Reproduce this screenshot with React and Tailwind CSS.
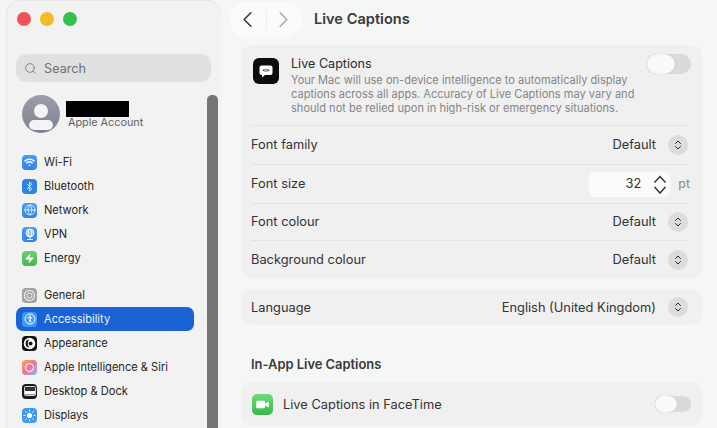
import { ChevronLeft, ChevronRight, ChevronsUpDown, Search, Bluetooth, Globe, Zap, Video } from 'lucide-react'

function IconBox({ className, children }) {
  return <div className={`w-[15px] h-[15px] rounded-[4px] flex items-center justify-center shrink-0 ${className}`}>{children}</div>
}

const GROUP_ONE = [
  {
    label: 'Wi-Fi',
    bg: 'bg-gradient-to-b from-[#4a9df5] to-[#2f82e6]',
    icon: (
      <svg width="11" height="9" viewBox="0 0 11 9" fill="none" stroke="white" strokeWidth="1.300" strokeLinecap="round">
        <path d="M1 3a6.500 6.500 0 0 1 9 0" />
        <path d="M2.800 5a4 4 0 0 1 5.400 0" />
        <circle cx="5.500" cy="7.300" r="0.900" fill="white" stroke="none" />
      </svg>
    ),
  },
  { label: 'Bluetooth', bg: 'bg-[#2f82e6]', icon: <Bluetooth size={11} strokeWidth={1.800} color="white" /> },
  { label: 'Network', bg: 'bg-gradient-to-b from-[#4a9df5] to-[#2f82e6]', icon: <Globe size={12} strokeWidth={1.500} color="white" /> },
  {
    label: 'VPN',
    bg: 'bg-gradient-to-b from-[#4a9df5] to-[#2f82e6]',
    icon: (
      <svg width="12" height="13" viewBox="0 0 12 13" fill="none" stroke="white" strokeWidth="0.900">
        <circle cx="6" cy="5" r="4" />
        <ellipse cx="6" cy="5" rx="1.800" ry="4" />
        <path d="M2 5h8M3 3h6M3 7h6M6 9v2M3 11.500h6" />
      </svg>
    ),
  },
  { label: 'Energy', bg: 'bg-gradient-to-b from-[#6ccf72] to-[#45b652]', icon: <Zap size={11} fill="white" strokeWidth={0} /> },
]

const GROUP_TWO = [
  {
    label: 'General',
    bg: 'bg-[#a3a3a6]',
    icon: (
      <svg width="13" height="13" viewBox="0 0 13 13" fill="none" stroke="white">
        <circle cx="6.500" cy="6.500" r="5" strokeWidth="1.200" strokeDasharray="1.400 0.400" />
        <circle cx="6.500" cy="6.500" r="2.500" strokeWidth="0.800" />
      </svg>
    ),
  },
  {
    label: 'Accessibility',
    active: true,
    bg: 'bg-[#3f97f0]',
    icon: (
      <svg width="12" height="12" viewBox="0 0 12 12" fill="none" stroke="white">
        <circle cx="6" cy="6" r="5" strokeWidth="1" />
        <circle cx="6" cy="3.400" r="0.900" fill="white" stroke="none" />
        <path d="M3.500 4.900h5M6 5v2M6 7L4.800 9.300M6 7l1.200 2.300" strokeWidth="1" />
      </svg>
    ),
  },
  {
    label: 'Appearance',
    bg: 'bg-[#111]',
    icon: (
      <svg width="13" height="13" viewBox="0 0 12 12">
        <circle cx="6" cy="6" r="5.300" fill="white" />
        <path d="M6 2.400a3.600 3.600 0 0 0 0 7.200c-1.200-1-1.600-2.300-1.600-3.600S4.800 3.400 6 2.400z" fill="#111" />
        <circle cx="7" cy="6" r="1.800" fill="#111" />
      </svg>
    ),
  },
  {
    label: 'Apple Intelligence & Siri',
    bg: 'bg-gradient-to-br from-[#f6a23c] via-[#ef6f9f] to-[#6cb8f5]',
    icon: <div className="w-[9px] h-[9px] rounded-full border border-white" />,
  },
  {
    label: 'Desktop & Dock',
    bg: 'bg-[#1b1b1b]',
    icon: (
      <svg width="12" height="10" viewBox="0 0 12 10">
        <rect x="0.500" y="0.500" width="11" height="9" rx="1" fill="#333" stroke="white" strokeWidth="0.800" />
        <rect x="1" y="5" width="10" height="3.500" fill="white" />
      </svg>
    ),
  },
  {
    label: 'Displays',
    bg: 'bg-[#3f9bf2]',
    icon: (
      <svg width="13" height="13" viewBox="0 0 13 13" fill="white" stroke="white" strokeWidth="1" strokeLinecap="round">
        <circle cx="6.500" cy="6.500" r="2.600" stroke="none" />
        <path d="M6.500 1v1M6.500 11v1M1 6.500h1M11 6.500h1M2.600 2.600l.7.7M9.700 9.700l.7.7M2.600 10.400l.7-.7M9.700 3.300l.7-.7" />
      </svg>
    ),
  },
]

function SideRow({ item }) {
  return (
    <div className={`h-6 flex items-center rounded-[7px] pl-[6px] gap-[7px] ${item.active ? 'bg-[#1a63d6] text-[#e8f1fd]' : 'text-[#262626]'}`}>
      <IconBox className={item.bg}>{item.icon}</IconBox>
      <span className="text-[11.100px] whitespace-nowrap">{item.label}</span>
    </div>
  )
}

function Sidebar() {
  return (
    <div className="relative w-[215px] ml-[6px] shrink-0 bg-[#f2f2f2] rounded-tl-[14px] rounded-tr-[14px] pl-[9px] pr-[27px] border-t border-l border-[#e6e6e6]">
      <div className="flex gap-[9px] pl-[1px] pt-[11px]">
        <div className="w-[14px] h-[14px] rounded-full bg-[#f2515a]" />
        <div className="w-[14px] h-[14px] rounded-full bg-[#f2bb28]" />
        <div className="w-[14px] h-[14px] rounded-full bg-[#35bf4e]" />
      </div>
      <div className="w-[195px] h-[28px] mt-[28px] rounded-[10px] bg-[#e0e0e0] flex items-center pl-[8px] gap-[7px] text-[#707070]">
        <Search size={13} strokeWidth={1.500} />
        <span className="text-[12.700px] mt-[2px]">Search</span>
      </div>
      <div className="flex items-center mt-[13px] ml-[6px]">
        <div className="w-[38px] h-[38px] rounded-full bg-gradient-to-b from-[#9a9eab] to-[#7f828d] relative overflow-hidden shrink-0">
          <div className="absolute left-[12px] top-[9px] w-[14px] h-[14px] rounded-full bg-[#f4f4f6]" />
          <div className="absolute left-[7px] top-[25px] w-[24px] h-[10px] rounded-full bg-[#f4f4f6]" />
        </div>
        <div className="ml-[6px] mt-[1px]">
          <div className="w-[63px] h-[16px] bg-black" />
          <div className="text-[10.800px] leading-[13px] ml-[2px] mt-[-1px] text-[#5f5f5f] whitespace-nowrap">Apple Account</div>
        </div>
      </div>
      <div className="mt-[17px]">
        {GROUP_ONE.map((item) => <SideRow key={item.label} item={item} />)}
      </div>
      <div className="mt-[13px]">
        {GROUP_TWO.map((item) => <SideRow key={item.label} item={item} />)}
      </div>
      <div className="absolute left-[200px] top-[94px] bottom-0 w-[11px] rounded-t-[5px] bg-[#757575]" />
    </div>
  )
}

function Stepper() {
  return (
    <div className="w-[20px] h-[20px] rounded-full bg-[#dcdcdc] flex items-center justify-center shrink-0">
      <ChevronsUpDown size={12} strokeWidth={2} color="#2a2a2a" />
    </div>
  )
}

function Toggle({ w, h, knob }) {
  return (
    <div className={`${w} ${h} rounded-full bg-[#dadada] shrink-0 flex items-center`}>
      <div className={`${knob} ${h} rounded-full bg-[#fafafa] shadow-[0_0_1px_rgba(0,0,0,0.3)]`} />
    </div>
  )
}

function SelectRow({ label, value, h, border = true, textClass = '' }) {
  return (
    <div className={`${h} ml-[10px] mr-[14px] flex items-center justify-between ${border ? 'border-t border-[#e2e2e2]' : ''}`}>
      <span className={`text-[12.850px] text-[#333] ${textClass}`}>{label}</span>
      <div className="flex items-center gap-[12px]">
        <span className={`text-[12.850px] text-[#333] ${textClass}`}>{value}</span>
        <Stepper />
      </div>
    </div>
  )
}

export default function App() {
  return (
    <div className="w-[717px] h-[428px] overflow-hidden flex bg-[#f5f6f6]" style={{ fontFamily: 'Inter, "Liberation Sans", sans-serif' }}>
      <Sidebar />
      <div className="flex-1 min-w-0">
        <div className="h-[45px] flex pt-[2px] pl-[8px]">
          <div className="w-[73px] h-[35px] rounded-full bg-[#fbfbfb] flex items-center pl-[5px]">
            <ChevronLeft size={27} strokeWidth={1.300} color="#333" />
            <div className="w-px h-[20px] bg-[#eeeeee] ml-[5px] mr-[3px]" />
            <ChevronRight size={27} strokeWidth={1.300} color="#a8a8a8" />
          </div>
          <span className="ml-[12px] mt-[9px] text-[14.600px] leading-[17px] font-semibold text-[#3a3a3a]">Live Captions</span>
        </div>
        <div className="ml-[20px] mr-[15px]">
          <div className="bg-[#f0f0f0] rounded-[10px]">
            <div className="h-[80px] flex pl-[12px] pr-[11px] pt-[9px]">
              <div className="w-[26px] h-[26px] mt-[4px] rounded-[6px] bg-[#0c0c0c] flex items-center justify-center shrink-0">
                <svg width="18" height="18" viewBox="0 0 18 18">
                  <path d="M4.500 3.500h9a2 2 0 0 1 2 2v5.500a2 2 0 0 1-2 2H8l-3 2.500v-2.500h-.5a2 2 0 0 1-2-2V5.500a2 2 0 0 1 2-2z" fill="white" />
                  <path d="M5.500 8.200l2-1.500v3zM12.500 8.200l-2-1.500v3z" fill="#333" />
                  <rect x="8.600" y="6.500" width="0.800" height="3.500" fill="#333" />
                </svg>
              </div>
              <div className="ml-[12px] flex-1 min-w-0 pt-[1px]">
                <div className="text-[12.600px] leading-[18px] text-[#2a2a2a]">Live Captions</div>
                <div className="text-[11.070px] leading-[14px] text-[#858585] whitespace-nowrap">
                  <div>Your Mac will use on-device intelligence to automatically display</div>
                  <div>captions across all apps. Accuracy of Live Captions may vary and</div>
                  <div>should not be relied upon in high-risk or emergency situations.</div>
                </div>
              </div>
              <Toggle w="w-[44px]" h="h-[20px]" knob="w-[28px]" />
            </div>
            <SelectRow label="Font family" value="Default" h="h-[39px]" />
            <div className="h-[39px] ml-[10px] mr-[12px] flex items-center justify-between border-t border-[#e2e2e2]">
              <span className="text-[12.850px] text-[#333]">Font size</span>
              <div className="flex items-center gap-[8px]">
                <div className="w-[81px] h-[25px] rounded-[6px] bg-[#fbfbfb] flex items-center justify-end pr-[3px]">
                  <span className="text-[12.850px] text-[#333] mr-[12px]">32</span>
                  <svg width="14" height="20" viewBox="0 0 14 20" fill="none" stroke="#333" strokeWidth="1.500">
                    <path d="M1.500 8.500L7 2.500l5.500 6" />
                    <path d="M1.500 13L7 19l5.500-6" />
                  </svg>
                </div>
                <span className="text-[12.500px] text-[#8a8a8a]">pt</span>
              </div>
            </div>
            <SelectRow label="Font colour" value="Default" h="h-[37px]" />
            <SelectRow label="Background colour" value="Default" h="h-[38px]" />
          </div>

          <div className="mt-[11px] h-[36px] bg-[#f0f0f0] rounded-[10px]">
            <SelectRow label="Language" value="English (United Kingdom)" h="h-[36px]" border={false} textClass="mt-[2px]" />
          </div>

          <div className="mt-[32px] ml-[10px] text-[12.900px] leading-[16px] font-semibold text-[#3a3a3a]">In-App Live Captions</div>

          <div className="mt-[9px] h-[44px] bg-[#f0f0f0] rounded-[10px] flex items-center pl-[11px] pr-[11px]">
            <div className="w-[21px] h-[21px] rounded-[5px] bg-gradient-to-b from-[#6fdc78] to-[#34b84a] flex items-center justify-center shrink-0">
              <Video size={15} fill="white" strokeWidth={0} />
            </div>
            <span className="ml-[10px] mt-[2px] flex-1 text-[12.850px] text-[#333]">Live Captions in FaceTime</span>
            <Toggle w="w-[36px]" h="h-[16px]" knob="w-[22px]" />
          </div>
        </div>
      </div>
    </div>
  )
}
